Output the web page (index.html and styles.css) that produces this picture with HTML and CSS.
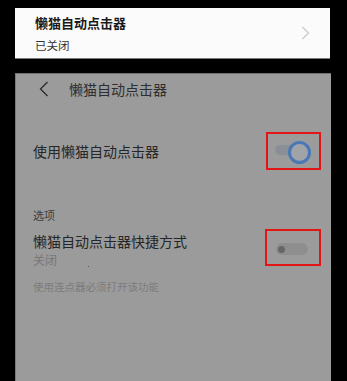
FILE: index.html
```html
<!DOCTYPE html>
<html lang="zh">
<head>
<meta charset="utf-8">
<link rel="stylesheet" href="styles.css">
</head>
<body>
<div class="card">
  <div class="card-text">
    <div class="card-title">懒猫自动点击器</div>
    <div class="card-sub">已关闭</div>
  </div>
  <svg class="chev" width="9" height="14" viewBox="0 0 9 14"><path d="M1.5 1 L7.5 7 L1.5 13" fill="none" stroke="#c9c9c9" stroke-width="1.2"/></svg>
</div>
<div class="panel">
  <div class="header">
    <svg class="back" width="10" height="16" viewBox="0 0 10 16"><path d="M8.5 1 L1.5 8 L8.5 15" fill="none" stroke="#2a2a2a" stroke-width="1.3"/></svg>
    <div class="header-title">懒猫自动点击器</div>
  </div>
  <div class="row row1">
    <div class="row-title">使用懒猫自动点击器</div>
    <div class="mark mark1">
      <div class="track1"></div>
      <div class="knob1"></div>
    </div>
  </div>
  <div class="label">选项</div>
  <div class="row row2">
    <div class="row-text">
      <div class="row-title">懒猫自动点击器快捷方式</div>
      <div class="row-sub">关闭</div>
      <div class="speck"></div>
    </div>
    <div class="mark mark2">
      <div class="track2"><div class="dot2"></div></div>
    </div>
  </div>
  <div class="hint">使用连点器必须打开该功能</div>
</div>
</body>
</html>
```
FILE: styles.css
```css
html, body {
  margin: 0;
  padding: 0;
  background: #000;
  height: 100%;
  overflow: hidden;
}
body {
  font-family: "Noto Sans CJK SC", "Noto Sans", sans-serif;
}
.card {
  margin: 8px 0 0 15px;
  width: 315px;
  height: 51px;
  background: #fbfbfb;
  border-bottom: 1px solid #7a7a7a;
  box-sizing: border-box;
  display: flex;
  align-items: center;
  justify-content: space-between;
  padding: 0 20px 0 20px;
}
.card-text {
  display: flex;
  flex-direction: column;
  gap: 7px;
  margin-top: 1px;
}
.card-title {
  font-size: 13px;
  line-height: 16px;
  font-weight: bold;
  color: #1a1a1a;
}
.card-sub {
  font-size: 11.5px;
  line-height: 14px;
  color: #333;
}
.chev {
  display: block;
  margin-top: 0;
}
.panel {
  margin: 14px 0 0 15px;
  width: 316px;
  height: 320px;
  background: #9b9b9b;
  border-top: 1px solid #6f6f6f;
  border-left: 1px solid #7c7c7c;
  box-sizing: border-box;
  padding-left: 17px;
}
.header {
  height: 29px;
  display: flex;
  align-items: center;
  padding-left: 6px;
}
.back {
  display: block;
  margin-right: 20px;
}
.header-title {
  font-size: 14px;
  line-height: 18px;
  color: #2e2e2e;
}
.row {
  display: flex;
  align-items: center;
  justify-content: space-between;
  padding-right: 10px;
}
.row1 {
  margin-top: 29px;
}
.row-title {
  font-size: 14px;
  line-height: 18px;
  color: #262626;
}
.mark {
  border: 2px solid #e31515;
  box-sizing: border-box;
  position: relative;
}
.mark1 {
  width: 55px;
  height: 38px;
}
.track1 {
  position: absolute;
  left: 7px;
  top: 11px;
  width: 24px;
  height: 10px;
  border-radius: 5px;
  background: #8a8e96;
}
.knob1 {
  position: absolute;
  left: 20px;
  top: 7px;
  width: 17px;
  height: 17px;
  border-radius: 50%;
  border: 3px solid #4a78b6;
  background: #a0a3a8;
}
.label {
  margin-top: 38px;
  font-size: 11px;
  line-height: 14px;
  color: #3d3d3d;
}
.row2 {
  margin-top: 6px;
}
.row-text {
  position: relative;
  margin-top: 4px;
}
.row-sub {
  font-size: 12px;
  line-height: 14px;
  color: #777;
  margin-top: 3px;
}
.speck {
  position: absolute;
  left: 55px;
  top: 34px;
  width: 1px;
  height: 1px;
  background: #555;
}
.mark2 {
  width: 56px;
  height: 37px;
  margin-right: 0;
}
.track2 {
  position: absolute;
  left: 9px;
  top: 12px;
  width: 32px;
  height: 12px;
  border-radius: 6px;
  background: #8e8e8e;
}
.dot2 {
  position: absolute;
  left: 2px;
  top: 2.5px;
  width: 7px;
  height: 7px;
  border-radius: 50%;
  background: #666;
}
.hint {
  margin-top: 13px;
  font-size: 10.5px;
  line-height: 14px;
  color: #7c7c7c;
}
```
